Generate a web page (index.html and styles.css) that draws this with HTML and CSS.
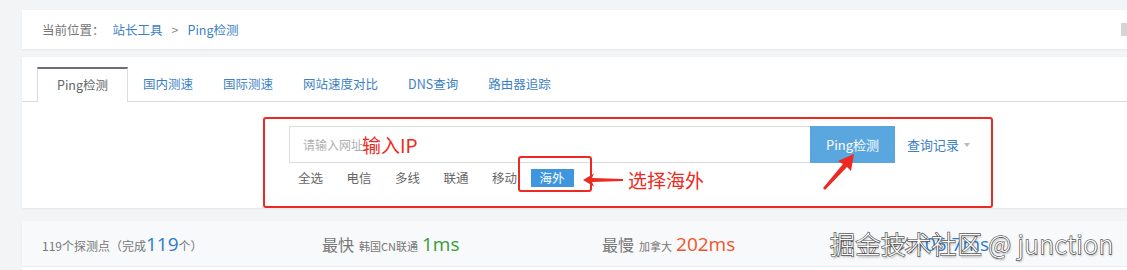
FILE: index.html
```html
<!DOCTYPE html>
<html lang="zh-CN">
<head>
    <meta charset="UTF-8">
    <title>Ping检测</title>
    <link rel="stylesheet" href="styles.css">
</head>
<body>
    <div class="wrap">
        <div class="crumb">
            <span class="crumb-label">当前位置：</span>
            <a class="crumb-link">站长工具</a>
            <span class="crumb-sep">&gt;</span>
            <a class="crumb-link">Ping检测</a>
            <span class="crumb-icon"></span>
        </div>

        <div class="tool-card">
            <ul class="tabs">
                <li class="tab active">Ping检测</li>
                <li class="tab">国内测速</li>
                <li class="tab">国际测速</li>
                <li class="tab">网站速度对比</li>
                <li class="tab">DNS查询</li>
                <li class="tab">路由器追踪</li>
            </ul>

            <div class="search">
                <div class="search-row">
                    <input class="search-input" type="text" placeholder="请输入网址">
                    <button class="search-btn">Ping检测</button>
                    <span class="history">查询记录<i class="caret"></i></span>
                </div>
                <div class="lines">
                    <span class="line">全选</span>
                    <span class="line">电信</span>
                    <span class="line">多线</span>
                    <span class="line">联通</span>
                    <span class="line">移动</span>
                    <span class="line on">海外</span>
                </div>
            </div>

            <!-- 标注 -->
            <div class="mark-box"></div>
            <div class="mark-box small"></div>
            <span class="mark-text ip">输入IP</span>
            <span class="mark-text abroad">选择海外</span>
            <svg class="mark-arrow left" width="40" height="14" viewBox="0 0 40 14">
                <path d="M0 7 L11 0.5 L9 5 L40 6 L40 8 L9 9 L11 13.5 Z" fill="#ec2a22"/>
            </svg>
            <svg class="mark-arrow up" width="36" height="38" viewBox="0 0 36 38">
                <path d="M32 1 L29 18 L25 14 L3 37 L1 35 L21 11 L16 8 Z" fill="#ec2a22"/>
            </svg>
        </div>

        <div class="stats">
            <div class="stat first">119个探测点（完成<b class="num blue">119</b>个）</div>
            <div class="stat"><span class="stat-name">最快</span><small>韩国CN联通</small><b class="num green">1ms</b></div>
            <div class="stat"><span class="stat-name">最慢</span><small>加拿大</small><b class="num orange">202ms</b></div>
            <div class="stat"><span class="stat-name">平均</span><b class="num blue">105.7ms</b></div>
        </div>
        <div class="next-card"></div>
    </div>

    <div class="watermark">掘金技术社区 @ junction</div>
</body>
</html>
```

FILE: styles.css
```css
* {
    box-sizing: border-box;
    margin: 0;
    padding: 0;
}

body {
    width: 1127px;
    height: 270px;
    overflow: hidden;
    background: #f3f4f5;
    font-family: "Microsoft YaHei", "Noto Sans CJK SC", sans-serif;
    padding: 10px 0 0 22px;
    position: relative;
}

.wrap {
    width: 1120px;
}

/* 面包屑 */
.crumb {
    height: 39px;
    background: #fff;
    box-shadow: 0 1px 2px rgba(0,0,0,0.06);
    display: flex;
    align-items: center;
    padding-left: 20px;
    font-size: 12.5px;
    color: #777;
}

.crumb-link {
    color: #3c7fc4;
}

.crumb-label {
    margin-right: 8px;
}

.crumb-sep {
    margin: 0 9px 0 9px;
    color: #888;
}

.crumb-icon {
    margin-left: auto;
    margin-right: 9px;
    width: 12px;
    height: 13px;
    background: #d5d5d5;
}

/* 工具卡片 */
.tool-card {
    position: relative;
    margin-top: 8px;
    height: 151px;
    background: #fff;
    box-shadow: 0 1px 2px rgba(0,0,0,0.06);
}

.tabs {
    list-style: none;
    display: flex;
    padding: 10px 0 0 15px;
    border-bottom: 1px solid #dcdcdc;
}

.tab {
    height: 34px;
    line-height: 34px;
    padding: 0 15px;
    font-size: 12.5px;
    color: #3c7fc4;
}

.tab.active {
    width: 91px;
    padding: 0;
    text-align: center;
    color: #666;
    background: #fff;
    border: 1px solid #dcdcdc;
    border-top: 2px solid #6b6e78;
    border-bottom: none;
    margin-bottom: -1px;
    height: 35px;
    line-height: 32px;
}

.search {
    margin: 24px 0 0 267px;
}

.search-row {
    display: flex;
    align-items: center;
}

.search-input {
    width: 521px;
    height: 37px;
    border: 1px solid #dcdcdc;
    border-right: none;
    padding-left: 13px;
    font-size: 12px;
    font-family: inherit;
    outline: none;
}

.search-input::placeholder {
    color: #b0b0b0;
}

.search-btn {
    width: 85px;
    height: 37px;
    border: none;
    background: #5aa6de;
    color: #fff;
    font-size: 13px;
    font-family: inherit;
}

.history {
    margin-left: 12px;
    font-size: 13px;
    color: #3c7fc4;
    display: flex;
    align-items: center;
}

.caret {
    margin-left: 5px;
    border-left: 3.5px solid transparent;
    border-right: 3.5px solid transparent;
    border-top: 4px solid #bbb;
}

.lines {
    display: flex;
    align-items: center;
    gap: 23.5px;
    margin-top: 6px;
    padding-left: 9px;
    font-size: 12.5px;
    color: #666;
}

.line {
    height: 18px;
    line-height: 18px;
}

.line.on {
    margin-left: -10px;
    padding: 0 9px;
    background: #3d96de;
    color: #fff;
}

/* 标注 */
.mark-box {
    position: absolute;
    left: 241px;
    top: 60px;
    width: 730px;
    height: 91px;
    border: 2px solid #ec2a22;
    border-radius: 3px;
}

.mark-box.small {
    left: 496px;
    top: 99px;
    width: 74px;
    height: 36px;
}

.mark-text {
    position: absolute;
    color: #ec2a22;
    font-size: 19px;
    line-height: 22px;
}

.mark-text.ip {
    left: 340px;
    top: 77px;
}

.mark-text.abroad {
    left: 606px;
    top: 112px;
}

.mark-arrow {
    position: absolute;
}

.mark-arrow.left {
    left: 561px;
    top: 116px;
}

.mark-arrow.up {
    left: 800px;
    top: 96px;
}

/* 统计 */
.stats {
    margin-top: 13px;
    height: 45px;
    background: #f8f9fa;
    box-shadow: 0 1px 2px rgba(0,0,0,0.05);
    display: flex;
    align-items: center;
    padding-left: 20px;
    color: #777;
    overflow: hidden;
}

.stat {
    flex: none;
    width: 280px;
    display: flex;
    align-items: baseline;
    font-size: 16px;
}

.stat.first {
    font-size: 12px;
}

.stat small {
    font-size: 11px;
    margin: 0 4px 0 5px;
}

.num {
    font-weight: normal;
    font-size: 19px;
    font-family: "Open Sans", "Noto Sans", sans-serif;
}

.blue { color: #2c7bd0; }
.green { color: #3a9a36; }
.orange { color: #f0532a; }

.next-card {
    margin-top: 1px;
    height: 10px;
    background: #fff;
}

.watermark {
    position: absolute;
    left: 830px;
    top: 227px;
    font-size: 25px;
    line-height: 32px;
    letter-spacing: 0.4px;
    font-family: "Noto Sans CJK SC", sans-serif;
    font-weight: 300;
    color: #fff;
    -webkit-text-stroke: 1.4px #5a5a5a;
    paint-order: stroke fill;
    text-shadow: 1px 2px 2px rgba(0,0,0,0.3);
}
```
